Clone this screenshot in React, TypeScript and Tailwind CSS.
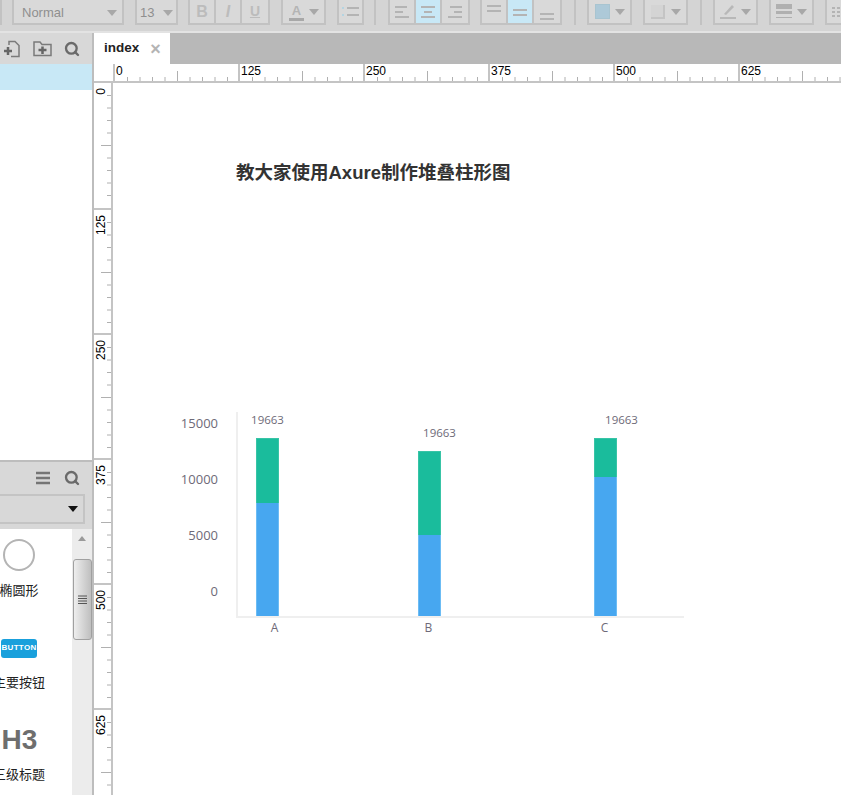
import type { ReactNode } from "react";
import { Search } from "lucide-react";

const Caret = ({ color = "#a8a8a8" }: { color?: string }) => (
  <svg width="10" height="6" viewBox="0 0 10 6">
    <path d="M0 0h10L5 6z" fill={color} />
  </svg>
);

function Group({ children, className }: { children: ReactNode; className: string }) {
  return (
    <div className={`flex h-[25px] shrink-0 border-2 border-t-0 border-[#c2c2c2] bg-[#d9d9d9] ${className}`}>
      {children}
    </div>
  );
}

function Cell({ active, last, children }: { active?: boolean; last?: boolean; children: ReactNode }) {
  return (
    <div
      className={`flex w-[26px] items-center justify-center ${last ? "" : "border-r-2 border-[#c2c2c2]"} ${
        active ? "bg-[#c8e8f6]" : ""
      }`}
    >
      {children}
    </div>
  );
}

// three bars used by the align buttons
function Lines({ rows }: { rows: [number, number, number][] }) {
  return (
    <svg width="18" height="18" viewBox="0 0 18 18">
      {rows.map(([x, y, w], i) => (
        <rect key={i} x={x} y={y} width={w} height="2" fill="#b4b4b4" />
      ))}
    </svg>
  );
}

function Toolbar() {
  return (
    <div className="flex h-[33px] shrink-0 border-b-2 border-[#e3e3e3] bg-[#d4d4d4]">
      <div className="h-[25px] w-[2px] shrink-0 bg-[#c2c2c2]" />
      <Group className="ml-[10px] w-[112px] items-center justify-between pl-[8px] pr-[5px] pt-[3px]">
        <span className="text-[13px] text-[#8f8f8f]">Normal</span>
        <Caret />
      </Group>
      <Group className="ml-[11px] w-[43px] items-center justify-between pl-[3px] pr-[3px] pt-[3px]">
        <span className="text-[13px] text-[#8f8f8f]">13</span>
        <Caret />
      </Group>
      <Group className="ml-[10px]">
        <Cell><span className="text-[16px] font-bold text-[#bcbcbc]">B</span></Cell>
        <Cell><span className="text-[16px] font-bold italic text-[#bcbcbc]">I</span></Cell>
        <Cell last><span className="text-[14px] font-bold text-[#bcbcbc] underline">U</span></Cell>
      </Group>
      <Group className="ml-[11px] w-[45px] items-center justify-between pl-[6px] pr-[5px] pt-[1px]">
        <div className="flex flex-col items-center">
          <span className="text-[13px] font-bold leading-[13px] text-[#b4b4b4]">A</span>
          <div className="mt-[1px] h-[3px] w-[15px] bg-[#a8a8a8]" />
        </div>
        <Caret />
      </Group>
      <Group className="ml-[11px] w-[27px] items-center justify-center">
        <svg width="17" height="14" viewBox="0 0 17 14">
          <rect x="0" y="2" width="2" height="2" fill="#b4d4e2" />
          <rect x="0" y="9" width="2" height="2" fill="#b4d4e2" />
          <rect x="5" y="2" width="12" height="2" fill="#b4b4b4" />
          <rect x="5" y="9" width="12" height="2" fill="#b4b4b4" />
        </svg>
      </Group>
      <div className="ml-[10px] h-[25px] w-[2px] shrink-0 bg-[#c2c2c2]" />
      <Group className="ml-[12px]">
        <Cell><Lines rows={[[2, 3, 12], [2, 8, 8], [2, 13, 14]]} /></Cell>
        <Cell active><Lines rows={[[2, 3, 14], [5, 8, 8], [2, 13, 14]]} /></Cell>
        <Cell last><Lines rows={[[4, 3, 12], [8, 8, 8], [2, 13, 14]]} /></Cell>
      </Group>
      <Group className="ml-[10px]">
        <Cell><Lines rows={[[2, 2, 14], [2, 7, 14]]} /></Cell>
        <Cell active><Lines rows={[[2, 6, 14], [2, 11, 14]]} /></Cell>
        <Cell last><Lines rows={[[2, 10, 14], [2, 15, 14]]} /></Cell>
      </Group>
      <div className="ml-[12px] h-[25px] w-[2px] shrink-0 bg-[#c2c2c2]" />
      <Group className="ml-[11px] w-[45px] items-center justify-between pl-[6px] pr-[5px]">
        <div className="h-[15px] w-[15px] border border-[#a8c4d0] bg-[#adc9d8]" />
        <Caret />
      </Group>
      <Group className="ml-[11px] w-[45px] items-center justify-between pl-[6px] pr-[5px]">
        <div className="h-[14px] w-[14px] border-b-2 border-r-2 border-[#c4c4c4] bg-[#d4d4d4]" />
        <Caret />
      </Group>
      <div className="ml-[12px] h-[25px] w-[2px] shrink-0 bg-[#c2c2c2]" />
      <Group className="ml-[11px] w-[45px] items-center justify-between pl-[5px] pr-[5px]">
        <svg width="17" height="17" viewBox="0 0 17 17">
          <path d="M4 11 12 2l2 2-8 8z" fill="#b8b8b8" />
          <rect x="0" y="14" width="16" height="2" fill="#b8b8b8" />
        </svg>
        <Caret />
      </Group>
      <Group className="ml-[11px] w-[45px] items-center justify-between pl-[5px] pr-[5px]">
        <svg width="17" height="16" viewBox="0 0 17 16">
          <rect x="0" y="0" width="16" height="5" fill="#b0b0b0" />
          <rect x="0" y="7" width="16" height="3" fill="#b0b0b0" />
          <rect x="0" y="13" width="16" height="1" fill="#b0b0b0" />
        </svg>
        <Caret />
      </Group>
      <Group className="ml-[11px] w-[45px] items-center pl-[5px]">
        <svg width="12" height="14" viewBox="0 0 12 14">
          <path d="M0 3h3M5 3h3M10 3h2M0 7h3M5 7h3M10 7h2M0 11h3M5 11h3M10 11h2" stroke="#b4b4b4" strokeWidth="2" />
        </svg>
      </Group>
    </div>
  );
}

function PagesPanel() {
  return (
    <div className="flex h-[429px] shrink-0 flex-col border-b-2 border-[#bdbdbd] bg-white">
      <div className="flex h-[31px] shrink-0 items-center justify-end gap-[12px] bg-[#d8d8d8] pr-[12px]">
        <svg width="18" height="18" viewBox="0 0 18 18" fill="none">
          <path d="M6 5V1.5h6l4 4V16.5H8" stroke="#7a7a7a" strokeWidth="1.5" />
          <path d="M1 11h8M5 7v8" stroke="#666" strokeWidth="2.5" />
        </svg>
        <svg width="19" height="17" viewBox="0 0 19 17" fill="none">
          <path d="M1 15.5V2h6l2 2.5h9v11z" stroke="#7a7a7a" strokeWidth="1.5" />
          <path d="M5.5 10h8M9.5 6.5v7.5" stroke="#666" strokeWidth="2.5" />
        </svg>
        <Search size={16} strokeWidth={3.5} color="#6a6a6a" />
      </div>
      <div className="h-[26px] shrink-0 bg-[#c8e8f6]" />
    </div>
  );
}

function Widget({ label, children }: { label: string; children: ReactNode }) {
  return (
    <div className="flex h-[92px] w-[38px] flex-col items-center">
      <div className="flex h-[44px] items-center">{children}</div>
      <span className="mt-[6px] whitespace-nowrap text-[13px] leading-[16px] text-[#222]">{label}</span>
    </div>
  );
}

function LibraryPanel() {
  return (
    <div className="flex min-h-0 flex-1 flex-col overflow-hidden">
      <div className="flex h-[32px] shrink-0 items-center justify-end gap-[14px] bg-[#d8d8d8] pr-[12px]">
        <svg width="14" height="14" viewBox="0 0 14 14">
          <path d="M0 2h14M0 7h14M0 12h14" stroke="#757575" strokeWidth="2.6" />
        </svg>
        <Search size={16} strokeWidth={3.5} color="#6a6a6a" />
      </div>
      <div className="h-[35px] shrink-0 bg-[#d8d8d8]">
        <div className="flex h-[30px] w-[85px] items-center justify-end border-b-2 border-r-2 border-t-2 border-[#c4c4c4] pr-[5px]">
          <Caret color="#111" />
        </div>
      </div>
      <div className="flex min-h-0 flex-1 bg-white">
        <div className="w-[72px] shrink-0 overflow-hidden pt-[4px]">
          <Widget label="椭圆形">
            <div className="h-[32px] w-[32px] rounded-full border-2 border-[#b4b4b4]" />
          </Widget>
          <Widget label="主要按钮">
            <div className="mt-[2px] flex h-[19px] w-[36px] items-center justify-center rounded-[3px] bg-[#19a0dc] font-['Liberation_Sans'] text-[8px] font-bold tracking-[0.3px] text-white">
              BUTTON
            </div>
          </Widget>
          <Widget label="三级标题">
            <span className="ml-[1px] mt-[2px] font-['Liberation_Sans'] text-[28px] font-bold text-[#6e6e6e]">H3</span>
          </Widget>
        </div>
        <div className="flex w-[20px] shrink-0 flex-col items-center bg-[#ececec]">
          <svg className="mt-[7px]" width="8" height="5" viewBox="0 0 8 5">
            <path d="M4 0 8 5H0z" fill="#9a9a9a" />
          </svg>
          <div className="mt-[18px] flex h-[81px] w-[19px] items-center justify-center rounded-[3px] border border-[#a0a0a0] bg-gradient-to-r from-[#eeeeee] to-[#bfbfbf]">
            <svg width="9" height="10" viewBox="0 0 9 10">
              <path d="M0 1h9M0 3.5h9M0 6h9M0 8.5h9" stroke="#555" strokeWidth="1" />
            </svg>
          </div>
        </div>
      </div>
    </div>
  );
}

const segTicks = [12.5, 25, 37.5, 50, 62.5, 75, 87.5, 100, 112.5];

function TopRuler() {
  return (
    <div className="flex h-[19px] shrink-0 overflow-hidden border-b-2 border-[#c4c4c4] bg-white pl-[19px]">
      {["0", "125", "250", "375", "500", "625"].map((n) => (
        <div key={n} className="relative h-full w-[125px] shrink-0 border-l-2 border-[#c4c4c4] pl-[1px]">
          <span className="block text-[12px] leading-[15px] text-black">{n}</span>
          <svg className="absolute bottom-0 left-0" width="125" height="10">
            {segTicks.map((t) => (
              <line key={t} x1={t} x2={t} y1={t === 62.5 ? 0 : 6} y2="10" stroke="#b0b0b0" />
            ))}
          </svg>
        </div>
      ))}
    </div>
  );
}

function LeftRuler() {
  return (
    <div className="flex w-[19px] shrink-0 flex-col overflow-hidden border-r-2 border-[#c4c4c4] bg-white">
      {["0", "125", "250", "375", "500", "625"].map((n) => (
        <div key={n} className="relative h-[125px] w-full shrink-0 border-t-2 border-[#c4c4c4] pt-[5px] first:border-t-0">
          <span className="block rotate-180 pl-[3px] text-[12px] leading-[14px] text-black [writing-mode:vertical-rl]">
            {n}
          </span>
          <svg className="absolute right-0 top-0" width="10" height="125">
            {segTicks.map((t) => (
              <line key={t} x1={t === 62.5 ? 0 : 6} x2="10" y1={t} y2={t} stroke="#b0b0b0" />
            ))}
          </svg>
        </div>
      ))}
    </div>
  );
}

const bars = [
  { name: "A", ml: "ml-[18px]", blue: "h-[113px]", green: "h-[65px]", labelX: "", nameX: "translate-x-[9px]" },
  { name: "B", ml: "ml-[139px]", blue: "h-[81px]", green: "h-[84px]", labelX: "translate-x-[10px]", nameX: "translate-x-[1px]" },
  { name: "C", ml: "ml-[153px]", blue: "h-[139px]", green: "h-[39px]", labelX: "translate-x-[16px]", nameX: "translate-x-[1px]" },
];

function Chart() {
  return (
    <div className="ml-[57px] mt-[227px] flex font-['Open_Sans','Noto_Sans_CJK_SC',sans-serif] text-[#6e6a78]">
      <div className="mt-[3px] flex w-[47px] flex-col items-end gap-[40px] pl-[1px] text-[13px] leading-[16px]">
        <span className="translate-x-[1px]">15000</span>
        <span className="translate-x-[1px]">10000</span>
        <span className="translate-x-[1px]">5000</span>
        <span className="translate-x-[1px]">0</span>
      </div>
      <div className="ml-[19px]">
        <div className="flex h-[206px] w-[448px] items-end border-b-2 border-l-2 border-[#efefef]">
          {bars.map((b) => (
            <div key={b.name} className={`flex w-[23px] flex-col items-center ${b.ml}`}>
              <span className={`mb-[10px] whitespace-nowrap text-[11.5px] leading-[16px] ${b.labelX}`}>19663</span>
              <div className={`w-full border border-b-0 border-[#38c4a6] bg-[#1abc9c] ${b.green}`} />
              <div className={`w-full border-x border-[#6cbcf4] bg-[#47a7f0] ${b.blue}`} />
            </div>
          ))}
        </div>
        <div className="flex">
          {bars.map((b) => (
            <div key={b.name} className={`flex w-[23px] justify-center text-[12px] leading-[20px] ${b.ml} ${b.nameX}`}>
              {b.name}
            </div>
          ))}
        </div>
      </div>
    </div>
  );
}

export default function App() {
  return (
    <div className="flex h-[795px] w-[841px] flex-col overflow-hidden bg-white font-['Liberation_Sans','Noto_Sans_CJK_SC',sans-serif]">
      <Toolbar />
      <div className="flex min-h-0 flex-1">
        <div className="flex w-[94px] shrink-0 flex-col border-r-2 border-[#bdbdbd]">
          <PagesPanel />
          <LibraryPanel />
        </div>
        <div className="flex min-w-0 flex-1 flex-col">
          <div className="flex h-[31px] shrink-0 bg-[#b8b8b8]">
            <div className="flex w-[76px] items-center bg-white pl-[10px]">
              <span className="text-[13.5px] font-bold text-[#222]">index</span>
              <span className="ml-[11px] text-[18px] font-bold leading-none text-[#b4b4b4]">×</span>
            </div>
          </div>
          <TopRuler />
          <div className="flex min-h-0 flex-1">
            <LeftRuler />
            <div className="min-w-0 flex-1">
              <h1 className="ml-[123px] mt-[78px] text-[18.5px] font-bold leading-[24px] text-[#333]">
                教大家使用Axure制作堆叠柱形图
              </h1>
              <Chart />
            </div>
          </div>
        </div>
      </div>
    </div>
  );
}
